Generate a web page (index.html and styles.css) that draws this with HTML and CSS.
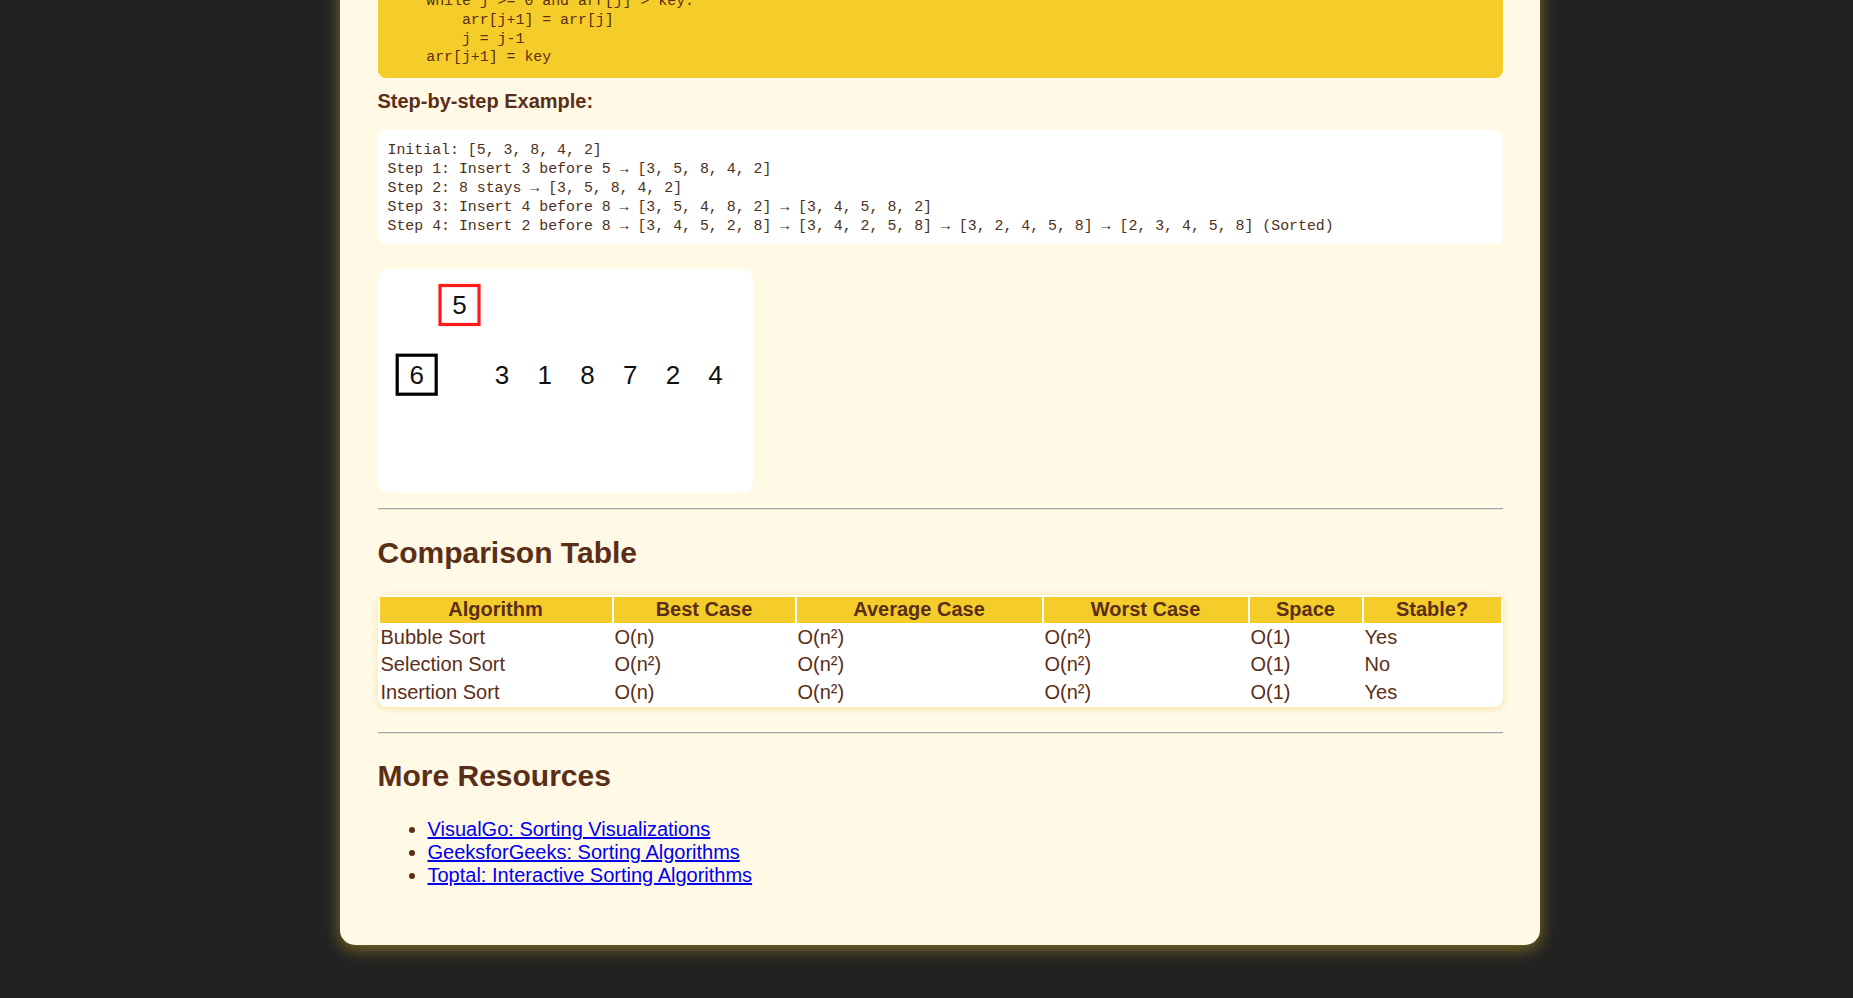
FILE: index.html
```html
<!DOCTYPE html>
<html lang="en">
<head>
<meta charset="utf-8">
<title>Insertion Sort</title>
<link rel="stylesheet" href="styles.css">
</head>
<body>
<main class="page">
  <div class="code-block"><pre class="code">for i in range(1, len(arr)):
    key = arr[i]
    j = i-1
    while j &gt;= 0 and arr[j] &gt; key:
        arr[j+1] = arr[j]
        j = j-1
    arr[j+1] = key</pre></div>

  <h3 class="sub-title">Step-by-step Example:</h3>
  <pre class="steps">Initial: [5, 3, 8, 4, 2]
Step 1: Insert 3 before 5 → [3, 5, 8, 4, 2]
Step 2: 8 stays → [3, 5, 8, 4, 2]
Step 3: Insert 4 before 8 → [3, 5, 4, 8, 2] → [3, 4, 5, 8, 2]
Step 4: Insert 2 before 8 → [3, 4, 5, 2, 8] → [3, 4, 2, 5, 8] → [3, 2, 4, 5, 8] → [2, 3, 4, 5, 8] (Sorted)</pre>

  <div class="viz">
    <svg class="viz-svg" width="375" height="224" viewBox="0 0 375 224">
      <rect x="62" y="16.5" width="39" height="39" fill="none" stroke="#ff1a1a" stroke-width="3.2"/>
      <text x="81.5" y="36" class="digit">5</text>
      <rect x="19.2" y="86.2" width="39" height="39" fill="none" stroke="#000" stroke-width="3.2"/>
      <text x="38.7" y="106" class="digit">6</text>
      <text x="124.1" y="106" class="digit">3</text>
      <text x="166.8" y="106" class="digit">1</text>
      <text x="209.5" y="106" class="digit">8</text>
      <text x="252.2" y="106" class="digit">7</text>
      <text x="294.9" y="106" class="digit">2</text>
      <text x="337.6" y="106" class="digit">4</text>
    </svg>
  </div>

  <hr class="divider">

  <h2 class="section-title">Comparison Table</h2>
  <table class="compare">
    <thead>
      <tr>
        <th class="c1">Algorithm</th>
        <th class="c2">Best Case</th>
        <th class="c3">Average Case</th>
        <th class="c4">Worst Case</th>
        <th class="c5">Space</th>
        <th class="c6">Stable?</th>
      </tr>
    </thead>
    <tbody>
      <tr><td>Bubble Sort</td><td>O(n)</td><td>O(n²)</td><td>O(n²)</td><td>O(1)</td><td>Yes</td></tr>
      <tr><td>Selection Sort</td><td>O(n²)</td><td>O(n²)</td><td>O(n²)</td><td>O(1)</td><td>No</td></tr>
      <tr><td>Insertion Sort</td><td>O(n)</td><td>O(n²)</td><td>O(n²)</td><td>O(1)</td><td>Yes</td></tr>
    </tbody>
  </table>

  <hr class="divider">

  <h2 class="section-title">More Resources</h2>
  <ul class="resources">
    <li><a href="#">VisualGo: Sorting Visualizations</a></li>
    <li><a href="#">GeeksforGeeks: Sorting Algorithms</a></li>
    <li><a href="#">Toptal: Interactive Sorting Algorithms</a></li>
  </ul>
</main>
</body>
</html>
```
FILE: styles.css
```css
html, body {
  background: #222222;
}

body {
  margin: 0;
  padding: 0 0 53px 27px;
  font-family: "Liberation Sans", Arial, sans-serif;
  color: #5a2e17;
}

.page {
  box-sizing: border-box;
  width: 1200px;
  margin: -114px auto 0;
  padding: 38px 37.5px 38px;
  background: #fff9e6;
  border-radius: 15px;
  box-shadow: 0 4px 16px rgba(245, 205, 42, 0.45);
}

.code-block {
  background: #f5cd2a;
  border-radius: 8px;
  padding: 11px 13px;
}

.code,
.steps {
  margin: 0;
  font-family: "Liberation Mono", "DejaVu Sans Mono", monospace;
  font-size: 14.88px;
  line-height: 18.9px;
  color: #5a2e17;
}

.sub-title {
  margin: 11.5px 0 17px;
  font-size: 20px;
  line-height: 23px;
  font-weight: bold;
}

.steps {
  background: #ffffff;
  border-radius: 8px;
  padding: 11.5px 10px 8.5px;
  color: #4d3020;
}

.viz {
  width: 375px;
  height: 224px;
  margin: 25px 0 15px;
  background: #ffffff;
  border-radius: 10px;
}

.viz-svg {
  display: block;
}

.digit {
  font-family: "Liberation Sans", Arial, sans-serif;
  font-size: 26px;
  fill: #111111;
  text-anchor: middle;
  dominant-baseline: central;
}

.divider {
  margin: 0;
  height: 0;
  border: 0;
  border-top: 1px solid #a3a3a3;
  border-bottom: 1px solid #ebe6d6;
}

.section-title {
  margin: 25.5px 0 24px;
  font-size: 30px;
  line-height: 34.5px;
  font-weight: bold;
}

.compare {
  width: 100%;
  margin: 25px 0 24.5px;
  table-layout: fixed;
  border-collapse: separate;
  border-spacing: 2px;
  background: #ffffff;
  border-radius: 9px;
  box-shadow: 0 1px 7px rgba(235, 195, 60, 0.45);
  font-size: 20px;
  line-height: 23.4px;
  color: #5a2e17;
}

.compare th,
.compare td {
  padding: 1px;
}

.compare th {
  background: #f5cd2a;
  font-weight: bold;
  text-align: center;
}

.compare td {
  text-align: left;
}

.c1 { width: 230px; }
.c2 { width: 179px; }
.c3 { width: 243px; }
.c4 { width: 202px; }
.c5 { width: 110px; }

.resources {
  margin: 23.5px 0 20px;
  padding-left: 50px;
  font-size: 20px;
  line-height: 23px;
}

.resources a {
  color: #0000ee;
  text-decoration: underline;
}
```
